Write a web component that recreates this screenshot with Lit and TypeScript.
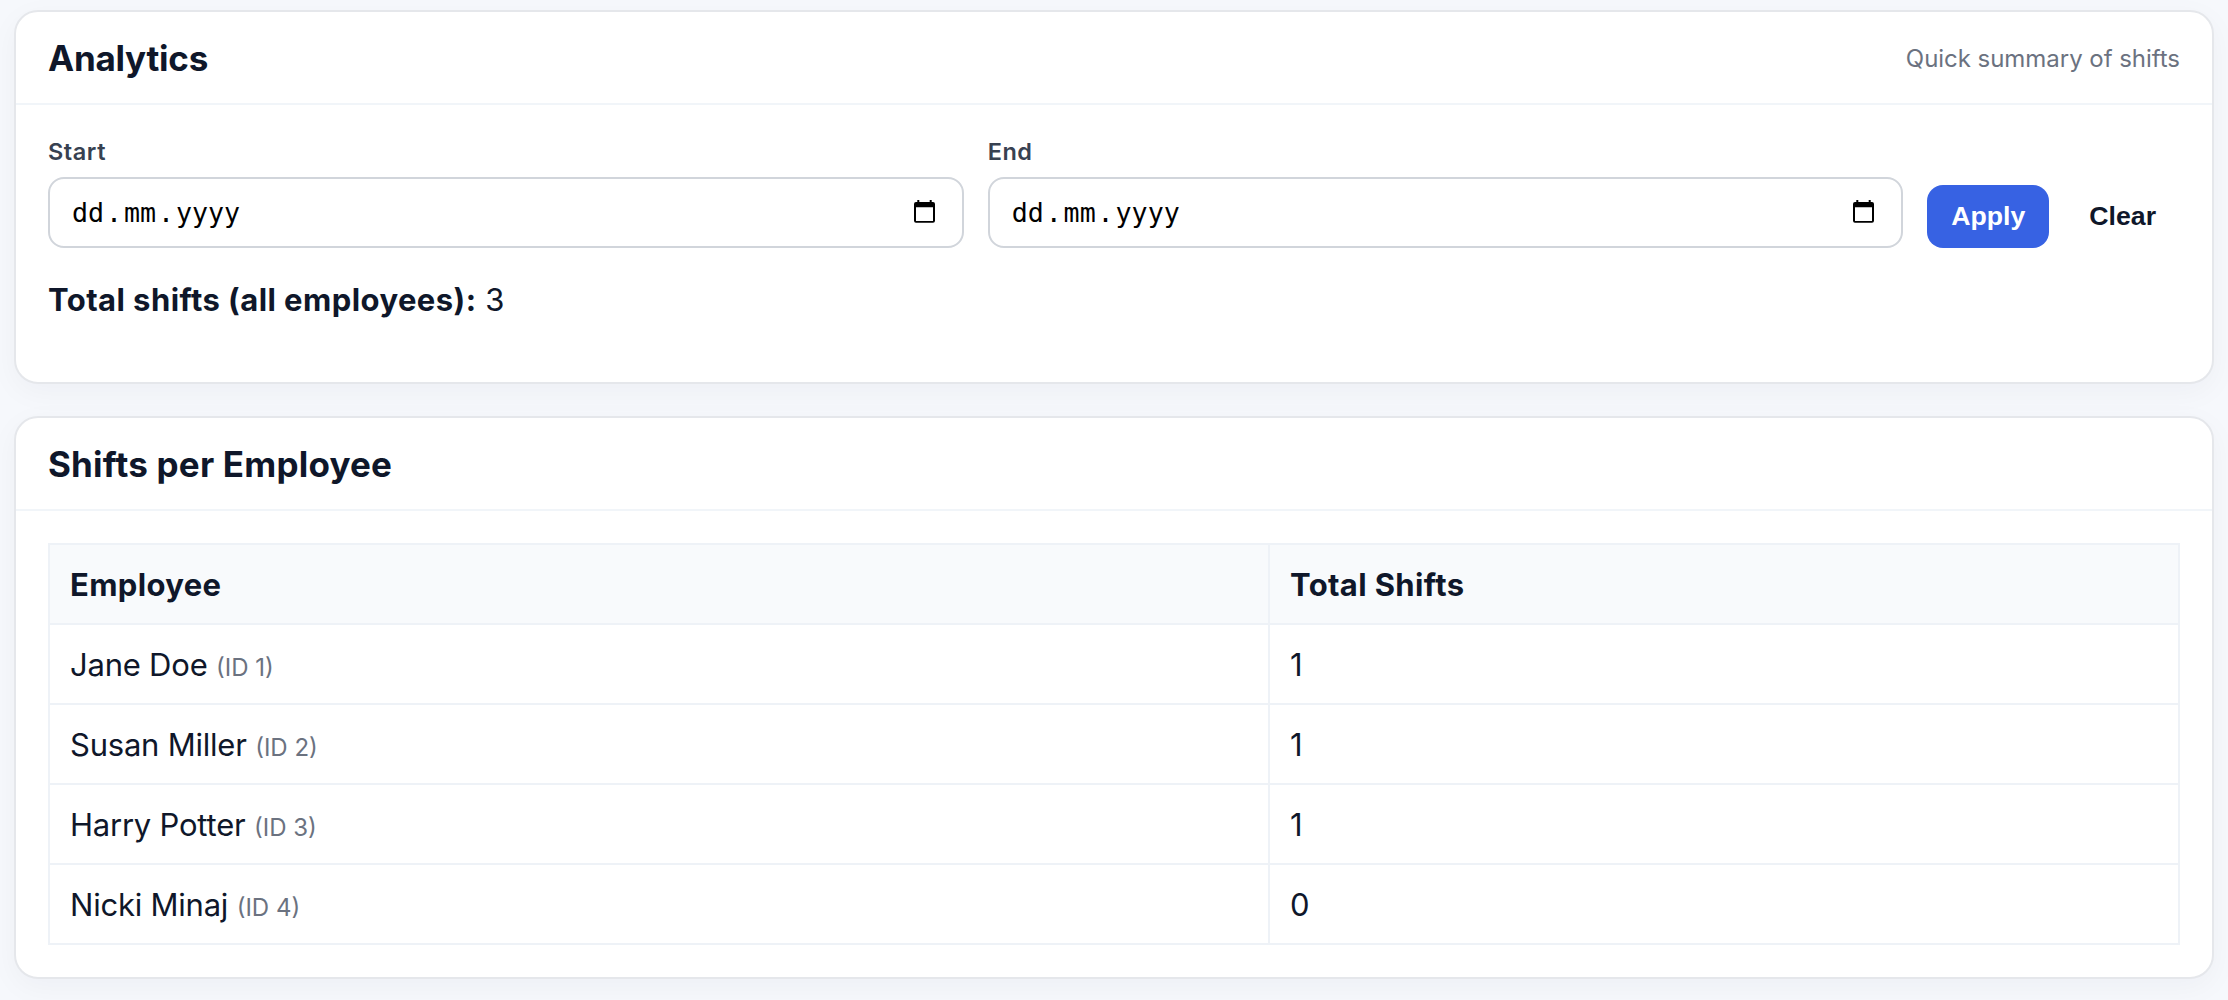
import { LitElement, html, css } from "lit";
import { customElement, property, state } from "lit/decorators.js";

interface Employee {
  id: number;
  name: string;
  shifts: number;
}

@customElement("date-field")
class DateField extends LitElement {
  @property() label = "";

  static styles = css`
    :host {
      display: block;
      flex: 1 1 0;
      min-width: 0;
    }
    .label {
      height: 29px;
      line-height: 29px;
      margin-bottom: 11px;
      font-size: 23.5px;
      font-weight: 600;
      letter-spacing: 0.55px;
      color: #374151;
    }
    .box {
      box-sizing: border-box;
      height: 71px;
      display: flex;
      align-items: center;
      justify-content: space-between;
      padding: 0 27px 0 22px;
      border: 2px solid #d1d5db;
      border-radius: 16px;
      background: #fff;
      color: #000;
    }
    .value {
      display: flex;
      font-family: "DejaVu Sans Mono", "Liberation Mono", monospace;
      font-size: 26.67px;
      line-height: 32px;
    }
    .sep {
      padding: 0 1.9px;
    }
    .icon {
      display: block;
      width: 21px;
      height: 23px;
      margin-bottom: 2px;
    }
  `;

  render() {
    return html`
      <div class="label">${this.label}</div>
      <div class="box">
        <div class="value">
          <span>dd</span><span class="sep">.</span><span>mm</span><span class="sep">.</span><span>yyyy</span>
        </div>
        <svg class="icon" viewBox="0 0 21 23">
          <path
            fill="#000"
            fill-rule="evenodd"
            d="M3.3 0h2v2h10.4V0h2v2H19q2 0 2 2v16.8q0 2-2 2H2q-2 0-2-2V4q0-2 2-2h1.3zM2 7.2V21h17V7.2z"
          />
        </svg>
      </div>
    `;
  }
}

@customElement("app-root")
class AppRoot extends LitElement {
  @state() private employees: Employee[] = [
    { id: 1, name: "Jane Doe", shifts: 1 },
    { id: 2, name: "Susan Miller", shifts: 1 },
    { id: 3, name: "Harry Potter", shifts: 1 },
    { id: 4, name: "Nicki Minaj", shifts: 0 },
  ];

  static styles = css`
    :host {
      display: block;
      box-sizing: border-box;
      height: 1000px;
      overflow: hidden;
      padding: 10px 14px 0;
      background: #f6f8fc;
      color: #0f172a;
      font-family: Inter, "Liberation Sans", sans-serif;
      font-size: 31px;
    }
    .card {
      box-sizing: border-box;
      border: 2px solid #e5e7eb;
      border-radius: 24px;
      background: #fff;
      box-shadow: 0 8px 30px rgba(15, 23, 42, 0.04);
    }
    .card + .card {
      margin-top: 32px;
    }
    .analytics {
      height: 374px;
    }
    .head {
      box-sizing: border-box;
      height: 93px;
      padding: 0 32px;
      display: flex;
      align-items: center;
      justify-content: space-between;
      border-bottom: 2px solid #f1f5f9;
    }
    .title {
      margin: 0;
      font-size: 35px;
      line-height: 44px;
      font-weight: 700;
      letter-spacing: 0.2px;
    }
    .analytics .title {
      letter-spacing: -0.25px;
    }
    .hint {
      margin-top: 2px;
      font-size: 24px;
      letter-spacing: -0.04px;
      color: #6b7280;
    }
    .body {
      padding: 32px;
    }
    .filters {
      display: flex;
      align-items: flex-end;
      gap: 24px;
    }
    .actions {
      display: flex;
      gap: 16px;
    }
    .btn {
      box-sizing: border-box;
      height: 63px;
      border: 0;
      border-radius: 16px;
      padding: 0 24px;
      font-family: "Liberation Sans", Arial, sans-serif;
      font-size: 26.67px;
      font-weight: 700;
      background: transparent;
      color: #0f172a;
    }
    .primary {
      background: #3762e3;
      color: #fff;
    }
    .total {
      margin-top: 32px;
      line-height: 40px;
    }
    .total-label {
      font-weight: 700;
      letter-spacing: 0.43px;
    }
    .table {
      width: 100%;
      table-layout: fixed;
      border-collapse: collapse;
    }
    .name-col {
      width: 1220px;
    }
    .cell {
      box-sizing: border-box;
      height: 80px;
      padding: 0 20px;
      border: 2px solid #eef2f7;
      text-align: left;
      font-weight: 400;
      letter-spacing: -0.22px;
    }
    .th {
      background: #f8fafc;
      font-weight: 700;
      letter-spacing: 0.36px;
    }
    .id {
      font-size: 24px;
      letter-spacing: 0;
      color: #6b7280;
    }
  `;

  render() {
    const total = this.employees.reduce((sum, e) => sum + e.shifts, 0);
    return html`
      <section class="card analytics">
        <header class="head">
          <h2 class="title">Analytics</h2>
          <span class="hint">Quick summary of shifts</span>
        </header>
        <div class="body">
          <div class="filters">
            <date-field label="Start"></date-field>
            <date-field label="End"></date-field>
            <div class="actions">
              <button class="btn primary">Apply</button>
              <button class="btn">Clear</button>
            </div>
          </div>
          <div class="total"><span class="total-label">Total shifts (all employees):</span> ${total}</div>
        </div>
      </section>
      <section class="card">
        <header class="head"><h2 class="title">Shifts per Employee</h2></header>
        <div class="body">
          <table class="table">
            <colgroup><col class="name-col" /><col /></colgroup>
            <thead>
              <tr><th class="cell th">Employee</th><th class="cell th">Total Shifts</th></tr>
            </thead>
            <tbody>
              ${this.employees.map(
                (e) => html`<tr>
                  <td class="cell">${e.name} <span class="id">(ID ${e.id})</span></td>
                  <td class="cell">${e.shifts}</td>
                </tr>`
              )}
            </tbody>
          </table>
        </div>
      </section>
    `;
  }
}
